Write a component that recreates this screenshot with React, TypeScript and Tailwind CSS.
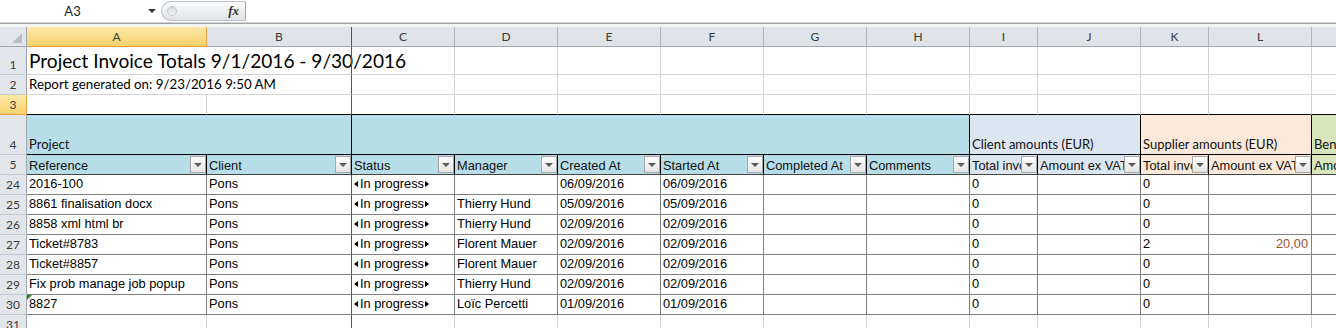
import clsx from "clsx";
import type { ReactNode } from "react";

type Col = "A" | "B" | "C" | "D" | "E" | "F" | "G" | "H" | "I" | "J" | "K" | "L" | "M";

const COLS: Col[] = ["A", "B", "C", "D", "E", "F", "G", "H", "I", "J", "K", "L", "M"];

const WIDTH: Record<Col, string> = {
  A: "w-[180px]",
  B: "w-[145px]",
  C: "w-[103px]",
  D: "w-[103px]",
  E: "w-[103px]",
  F: "w-[103px]",
  G: "w-[103px]",
  H: "w-[103px]",
  I: "w-[68px]",
  J: "w-[103px]",
  K: "w-[68px]",
  L: "w-[103px]",
  M: "w-[60px]",
};

const HEAD_BG: Record<Col, string> = {
  A: "bg-[#b7dee8]",
  B: "bg-[#b7dee8]",
  C: "bg-[#b7dee8]",
  D: "bg-[#b7dee8]",
  E: "bg-[#b7dee8]",
  F: "bg-[#b7dee8]",
  G: "bg-[#b7dee8]",
  H: "bg-[#b7dee8]",
  I: "bg-[#dce6f1]",
  J: "bg-[#dce6f1]",
  K: "bg-[#fde9d9]",
  L: "bg-[#fde9d9]",
  M: "bg-[#d8e4bc]",
};

const FIELDS: Record<Col, string> = {
  A: "Reference",
  B: "Client",
  C: "Status",
  D: "Manager",
  E: "Created At",
  F: "Started At",
  G: "Completed At",
  H: "Comments",
  I: "Total invoiced",
  J: "Amount ex VAT",
  K: "Total invoiced",
  L: "Amount ex VAT",
  M: "Amount",
};

type Line = {
  n: number;
  ref: string;
  manager: string;
  created: string;
  started: string;
  client: string;
  supplier: string;
  amount?: string;
  flag?: boolean;
};

const LINES: Line[] = [
  { n: 24, ref: "2016-100", manager: "", created: "06/09/2016", started: "06/09/2016", client: "0", supplier: "0" },
  { n: 25, ref: "8861 finalisation docx", manager: "Thierry Hund", created: "05/09/2016", started: "05/09/2016", client: "0", supplier: "0" },
  { n: 26, ref: "8858 xml html br", manager: "Thierry Hund", created: "02/09/2016", started: "02/09/2016", client: "0", supplier: "0" },
  { n: 27, ref: "Ticket#8783", manager: "Florent Mauer", created: "02/09/2016", started: "02/09/2016", client: "0", supplier: "2", amount: "20,00" },
  { n: 28, ref: "Ticket#8857", manager: "Florent Mauer", created: "02/09/2016", started: "02/09/2016", client: "0", supplier: "0" },
  { n: 29, ref: "Fix prob manage job popup", manager: "Thierry Hund", created: "02/09/2016", started: "02/09/2016", client: "0", supplier: "0" },
  { n: 30, ref: "8827", manager: "Loïc Percetti", created: "01/09/2016", started: "01/09/2016", client: "0", supplier: "0", flag: true },
];

const calibri = "font-['Lato',sans-serif]";

function RowHead({ n, active }: { n: number; active?: boolean }) {
  return (
    <div
      className={clsx(
        "w-[27px] shrink-0 flex items-end justify-center pb-[2px] border-r border-b text-[12px] leading-[14px] text-[#3b3b3b]",
        calibri,
        active
          ? "bg-linear-to-b from-[#fde8a8] to-[#f9d470] border-r-[#eea040] border-b-[#eea040]"
          : "bg-[#e2e5e9] border-r-[#9ea6b0] border-b-[#c4c9cf]",
      )}
    >
      {n}
    </div>
  );
}

function FilterButton() {
  return (
    <div className="w-[16px] h-[17px] shrink-0 self-center flex items-center justify-center border border-[#a7a7a7] bg-linear-to-b from-white to-[#e4e4e4]">
      <div className="w-0 h-0 border-x-[4px] border-x-transparent border-t-[4px] border-t-[#5a5a5a]" />
    </div>
  );
}

function Status() {
  return (
    <span className="flex items-center h-[16px]">
      <span className="w-0 h-0 border-y-[3px] border-y-transparent border-r-[4px] border-r-black mr-[2px]" />
      <span className="leading-[16px]">In progress</span>
      <span className="w-0 h-0 border-y-[3px] border-y-transparent border-l-[4px] border-l-black ml-[1px]" />
    </span>
  );
}

function FormulaBar() {
  return (
    <div>
      <div className="flex h-[22px] bg-white">
        <div className="w-[161px] shrink-0 flex items-center">
          <div className={clsx("w-[145px] text-center text-[13px] leading-[16px] text-[#222]", calibri)}>A3</div>
          <div className="w-0 h-0 ml-[3px] border-x-[4px] border-x-transparent border-t-[4px] border-t-[#333]" />
        </div>
        <div className="w-[85px] shrink-0 my-[1px] flex items-center justify-between pl-[5px] pr-[6px] rounded-l-[11px] border border-[#b9bfc8] border-r-[#a9a9a9] bg-linear-to-b from-[#fafbfc] to-[#e1e4e8]">
          <div className="w-[10px] h-[10px] rounded-full border border-[#c3c7cc] bg-linear-to-b from-[#d3d6da] to-[#f8f8f8]" />
          <span className="font-['Liberation_Serif',serif] italic font-bold text-[13px] leading-[16px] text-[#333]">fx</span>
        </div>
        <div className="flex-1 bg-white" />
      </div>
      <div className="h-[1px] bg-[#d0d0d0]" />
      <div className="h-[1px] bg-[#a3a3a3]" />
      <div className="h-[3px] bg-[#f3f3f3]" />
    </div>
  );
}

function ColumnHeaders() {
  return (
    <div className="flex h-[20px]">
      <div className="w-[27px] shrink-0 relative border-r border-b border-[#9ea6b0] bg-[#e2e5e9]">
        <div className="absolute right-[4px] bottom-[3px] w-0 h-0 border-l-[10px] border-l-transparent border-b-[10px] border-b-[#b9bec5]" />
      </div>
      {COLS.map((c) => (
        <div
          key={c}
          className={clsx(
            WIDTH[c],
            "shrink-0 flex items-center justify-center border-r border-b text-[12px] leading-[14px] text-[#3b3b3b]",
            calibri,
            c === "A"
              ? "bg-linear-to-b from-[#fde8a8] to-[#f8d16b] border-b-[#ee9d3a] border-r-[#eaa64a]"
              : "bg-[#e0e3e8] border-b-[#9ea6b0]",
            c === "B" && "border-r-[#555]",
            c !== "A" && c !== "B" && "border-r-[#b0b6be]",
          )}
        >
          {c === "M" ? "" : c}
        </div>
      ))}
    </div>
  );
}

function TitleRows() {
  return (
    <>
      <div className="flex h-[28px]">
        <RowHead n={1} />
        {COLS.map((c) => (
          <div
            key={c}
            className={clsx(
              WIDTH[c],
              "shrink-0 border-b border-b-[#d4d4d4]",
              c !== "A" && "border-r",
              c === "B" ? "border-r-[#555]" : "border-r-[#d4d4d4]",
              c === "A" && "flex items-end pb-[2px] pl-[2px]",
            )}
          >
            {c === "A" && (
              <span className={clsx("whitespace-nowrap text-[19.1px] leading-[23px] text-black", calibri)}>
                Project Invoice Totals 9/1/2016 - 9/30/2016
              </span>
            )}
          </div>
        ))}
      </div>
      <div className="flex h-[20px]">
        <RowHead n={2} />
        {COLS.map((c) => (
          <div
            key={c}
            className={clsx(
              WIDTH[c],
              "shrink-0 border-b border-b-[#d4d4d4]",
              c !== "A" && "border-r",
              c === "B" ? "border-r-[#555]" : "border-r-[#d4d4d4]",
              c === "A" && "flex items-end pb-[2px] pl-[2px]",
            )}
          >
            {c === "A" && (
              <span className={clsx("whitespace-nowrap text-[13.3px] leading-[16px] text-black", calibri)}>
                Report generated on: 9/23/2016 9:50 AM
              </span>
            )}
          </div>
        ))}
      </div>
      <div className="flex h-[20px]">
        <RowHead n={3} active />
        {COLS.map((c) => (
          <div
            key={c}
            className={clsx(
              WIDTH[c],
              "shrink-0 border-r border-b border-b-black",
              c === "B" ? "border-r-[#555]" : "border-r-[#d4d4d4]",
            )}
          />
        ))}
      </div>
    </>
  );
}

function GroupRow() {
  const groups: { w: string; bg: string; label: string; last?: boolean }[] = [
    { w: "w-[325px]", bg: "bg-[#b7dee8]", label: "Project" },
    { w: "w-[618px]", bg: "bg-[#b7dee8]", label: "" },
    { w: "w-[171px]", bg: "bg-[#dce6f1]", label: "Client amounts (EUR)" },
    { w: "w-[171px]", bg: "bg-[#fde9d9]", label: "Supplier amounts (EUR)" },
    { w: "w-[60px]", bg: "bg-[#d8e4bc]", label: "Benefit (EUR)", last: true },
  ];
  return (
    <div className="flex h-[40px]">
      <RowHead n={4} />
      {groups.map((g, i) => (
        <div
          key={i}
          className={clsx(
            g.w,
            g.bg,
            "shrink-0 flex items-end pb-[2px] px-[2px] border-b border-b-black overflow-hidden whitespace-nowrap",
            !g.last && "border-r border-r-black",
          )}
        >
          <span className={clsx("text-[13px] leading-[16px] text-[#111]", calibri)}>{g.label}</span>
        </div>
      ))}
    </div>
  );
}

function FieldRow() {
  return (
    <div className="flex h-[20px]">
      <RowHead n={5} />
      {COLS.map((c) => (
        <div
          key={c}
          className={clsx(
            WIDTH[c],
            HEAD_BG[c],
            "shrink-0 flex items-end pl-[2px] border-b border-b-[#444] border-r border-r-black",
          )}
        >
          <span className="flex-1 min-w-0 overflow-hidden whitespace-nowrap leading-[16px] text-[#111]">
            {FIELDS[c]}
          </span>
          {c !== "M" && <FilterButton />}
        </div>
      ))}
    </div>
  );
}

function DataRow({ r }: { r: Line }) {
  const content: Partial<Record<Col, ReactNode>> = {
    A: r.ref,
    B: "Pons",
    C: <Status />,
    D: r.manager,
    E: r.created,
    F: r.started,
    I: r.client,
    K: r.supplier,
    L: r.amount ? <span className="text-[#a0522d]">{r.amount}</span> : null,
  };
  return (
    <div className="flex h-[20px]">
      <RowHead n={r.n} />
      {COLS.map((c) => (
        <div
          key={c}
          className={clsx(
            WIDTH[c],
            "shrink-0 relative flex items-end pb-[2px] pl-[2px] border-r border-b border-b-[#808080] overflow-hidden whitespace-nowrap",
            c === "B" ? "border-r-[#555]" : "border-r-[#808080]",
            c === "L" && "justify-end pr-[3px]",
          )}
        >
          {c === "A" && r.flag && (
            <div className="absolute left-0 top-0 w-0 h-0 border-t-[5px] border-t-[#1e8a1e] border-r-[5px] border-r-transparent" />
          )}
          <span className="leading-[16px]">{content[c]}</span>
        </div>
      ))}
    </div>
  );
}

function EmptyRow({ n }: { n: number }) {
  return (
    <div className="flex h-[20px]">
      <RowHead n={n} />
      {COLS.map((c) => (
        <div
          key={c}
          className={clsx(WIDTH[c], "shrink-0 border-r", c === "B" ? "border-r-[#555]" : "border-r-[#d4d4d4]")}
        />
      ))}
    </div>
  );
}

export default function App() {
  return (
    <div className="w-[1336px] h-[328px] overflow-hidden bg-white text-black font-['Liberation_Sans',Arial,sans-serif] text-[12.8px]">
      <FormulaBar />
      <ColumnHeaders />
      <TitleRows />
      <GroupRow />
      <FieldRow />
      {LINES.map((r) => (
        <DataRow key={r.n} r={r} />
      ))}
      <EmptyRow n={31} />
    </div>
  );
}
